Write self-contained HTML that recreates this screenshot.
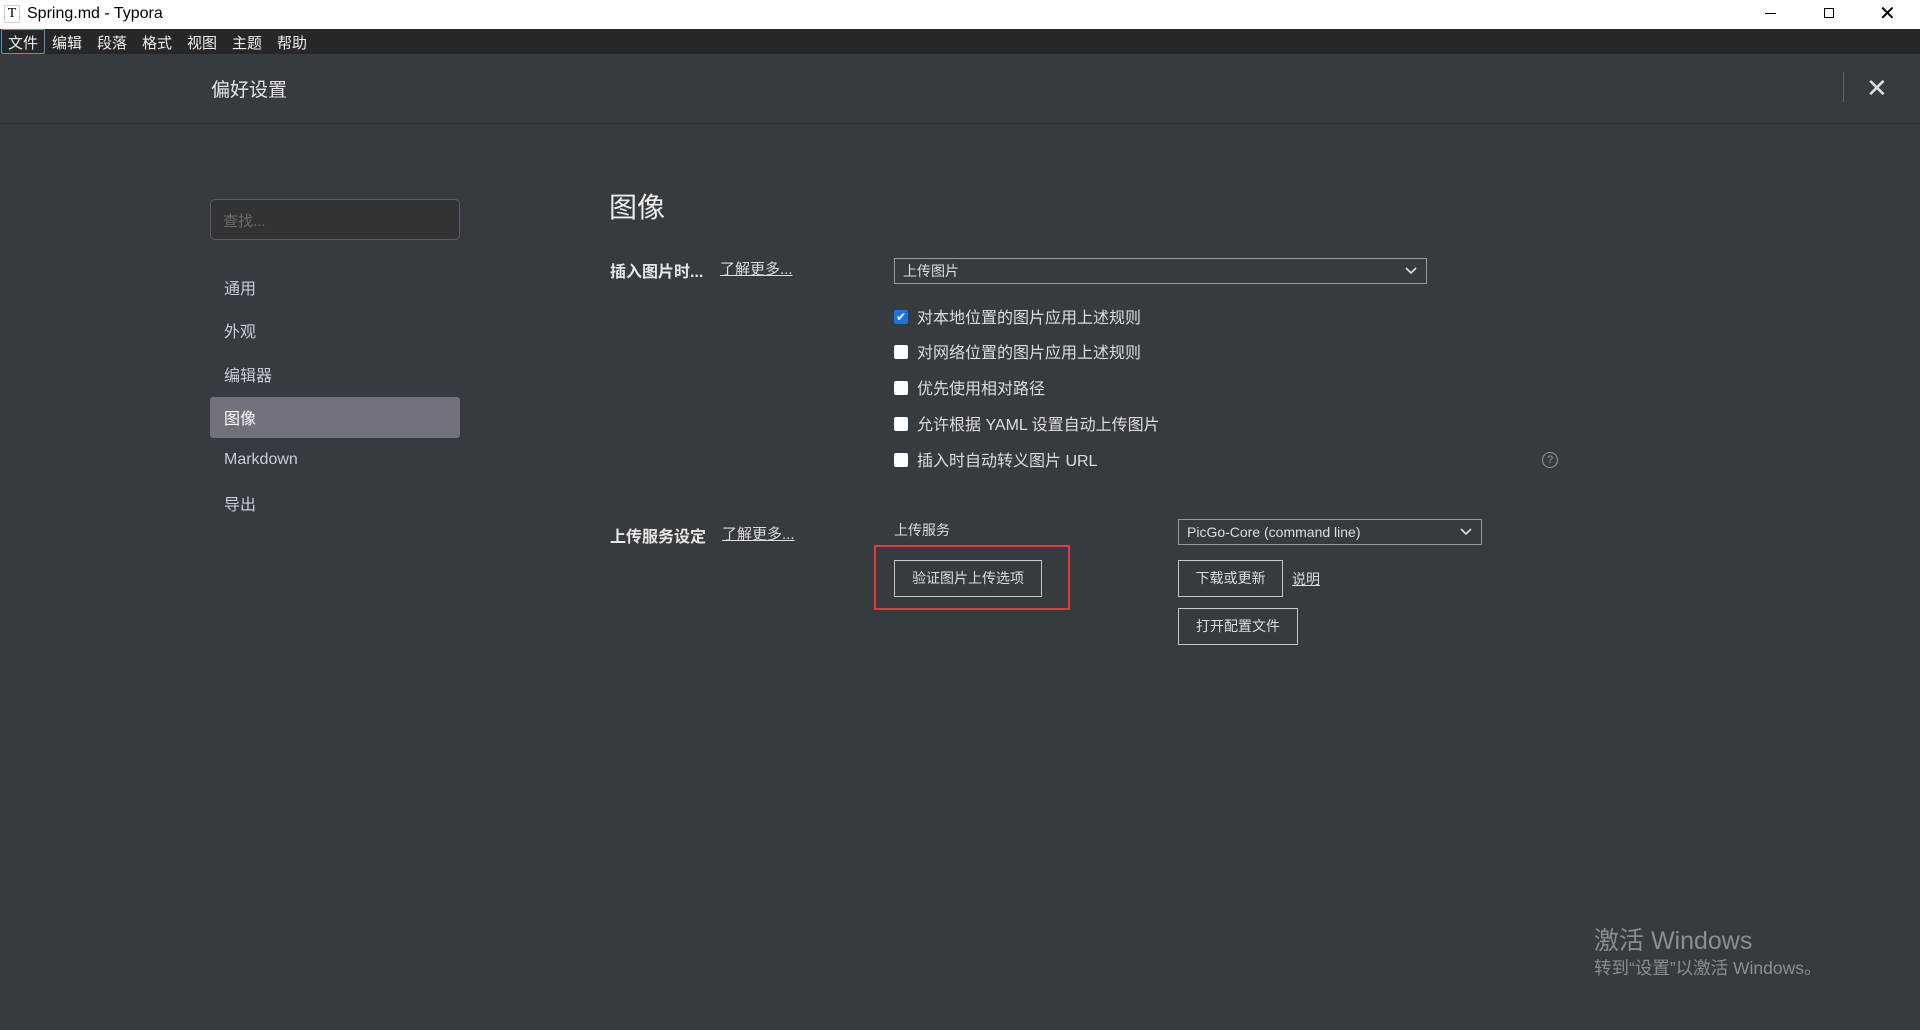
<!DOCTYPE html>
<html><head><meta charset="utf-8"><style>
*{margin:0;padding:0;box-sizing:border-box}
body{width:1920px;height:1030px;background:#363b40;font-family:"Liberation Sans","Noto Sans CJK SC",sans-serif;color:#dcdcdc;position:relative;overflow:hidden}
.a{position:absolute;white-space:nowrap}
.title{left:0;top:0;width:1920px;height:29px;background:#fff;color:#000;font-size:16px}
.menu{left:0;top:29px;width:1920px;height:25px;background:#262729;color:#eee;font-size:15px}
.hdr{left:0;top:54px;width:1920px;height:70px;background:#363b40;border-bottom:1px solid #2e3236}
.cb{width:14px;height:14px;background:#fff;border-radius:2px;left:894px}
.btn{border:1px solid #c8c8c8;color:#ddd;font-size:14px;text-align:center}
.sel{border:1px solid #9a9a9a;font-size:14px;color:#ddd;padding-left:8px}
.ck{font-size:16px;left:917px;color:#ddd}
.side{left:224px;font-size:16px;color:#c8ccd4}
u{text-decoration:underline}
.arr{position:absolute;right:9px;top:8px}
</style></head><body>
<div class="a title">
 <div class="a" style="left:4px;top:5px;width:16px;height:18px;border:1px solid #ccc;border-radius:2px;font-family:'Liberation Serif',serif;font-size:14px;text-align:center;line-height:16px">T</div>
 <div class="a" style="left:27px;top:5px">Spring.md - Typora</div>
 <div class="a" style="left:1765px;top:13px;width:11px;height:1px;background:#000"></div>
 <div class="a" style="left:1824px;top:8px;width:10px;height:10px;border:1px solid #000"></div>
 <div class="a" style="left:1879px;top:1px;font-size:20px">✕</div>
</div>
<div class="a menu">
 <div class="a" style="left:1px;top:0;width:44px;height:25px;border:1px solid #5b8fd6;border-radius:2px"></div>
 <div class="a" style="left:8px;top:3px">文件</div>
 <div class="a" style="left:52px;top:3px">编辑</div>
 <div class="a" style="left:97px;top:3px">段落</div>
 <div class="a" style="left:142px;top:3px">格式</div>
 <div class="a" style="left:187px;top:3px">视图</div>
 <div class="a" style="left:232px;top:3px">主题</div>
 <div class="a" style="left:277px;top:3px">帮助</div>
</div>
<div class="a hdr">
 <div class="a" style="left:211px;top:21px;font-size:19px;color:#e6e6e6">偏好设置</div>
 <div class="a" style="left:1843px;top:18px;width:1px;height:30px;background:#666"></div>
 <div class="a" style="left:1866px;top:19px;font-size:26px;color:#ddd">✕</div>
</div>
<div class="a" style="left:210px;top:199px;width:250px;height:41px;border:1px solid #5a5d61;border-radius:5px;background:#313335"></div>
<div class="a" style="left:223px;top:210px;font-size:15px;color:#6a6d70">查找...</div>
<div class="a side" style="top:275px">通用</div>
<div class="a side" style="top:318px">外观</div>
<div class="a side" style="top:362px">编辑器</div>
<div class="a" style="left:210px;top:397px;width:250px;height:41px;background:#71717b;border-radius:3px"></div>
<div class="a side" style="top:405px;color:#fff">图像</div>
<div class="a side" style="top:451px">Markdown</div>
<div class="a side" style="top:491px">导出</div>

<div class="a" style="left:609px;top:186px;font-size:28px;color:#eee">图像</div>
<div class="a" style="left:610px;top:258px;font-size:16px;font-weight:bold;color:#e6e6e6">插入图片时...</div>
<div class="a" style="left:720px;top:258px;font-size:15px"><u>了解更多...</u></div>
<div class="a sel" style="left:894px;top:258px;width:533px;height:26px;line-height:24px">上传图片<svg class="arr" width="12" height="8" viewBox="0 0 12 8"><path d="M1 1l5 5 5-5" stroke="#ddd" stroke-width="1.6" fill="none"/></svg></div>
<div class="a cb" style="top:310px;background:#1a73e8;color:#fff;font-size:12px;text-align:center;line-height:14px">✔</div>
<div class="a ck" style="top:304px">对本地位置的图片应用上述规则</div>
<div class="a cb" style="top:345px"></div><div class="a ck" style="top:339px">对网络位置的图片应用上述规则</div>
<div class="a cb" style="top:381px"></div><div class="a ck" style="top:375px">优先使用相对路径</div>
<div class="a cb" style="top:417px"></div><div class="a ck" style="top:411px">允许根据 YAML 设置自动上传图片</div>
<div class="a cb" style="top:453px"></div><div class="a ck" style="top:447px">插入时自动转义图片 URL</div>
<div class="a" style="left:1542px;top:452px;width:16px;height:16px;border:1px solid #999;border-radius:50%;font-size:11px;text-align:center;line-height:14px;color:#999">?</div>

<div class="a" style="left:610px;top:523px;font-size:16px;font-weight:bold;color:#e6e6e6">上传服务设定</div>
<div class="a" style="left:722px;top:523px;font-size:15px"><u>了解更多...</u></div>
<div class="a" style="left:894px;top:520px;font-size:14px;color:#ddd">上传服务</div>
<div class="a sel" style="left:1178px;top:519px;width:304px;height:26px;line-height:24px">PicGo-Core (command line)<svg class="arr" width="12" height="8" viewBox="0 0 12 8"><path d="M1 1l5 5 5-5" stroke="#ddd" stroke-width="1.6" fill="none"/></svg></div>
<div class="a" style="left:874px;top:545px;width:196px;height:65px;border:2px solid #e53935"></div>
<div class="a btn" style="left:894px;top:560px;width:148px;height:37px;line-height:35px">验证图片上传选项</div>
<div class="a btn" style="left:1178px;top:560px;width:105px;height:37px;line-height:35px">下载或更新</div>
<div class="a" style="left:1292px;top:569px;font-size:14px"><u>说明</u></div>
<div class="a btn" style="left:1178px;top:608px;width:120px;height:37px;line-height:35px">打开配置文件</div>

<div class="a" style="left:1594px;top:921px;font-size:25px;color:#8a8e93">激活 Windows</div>
<div class="a" style="left:1594px;top:955px;font-size:17.5px;color:#8a8e93">转到“设置”以激活 Windows。</div>
</body></html>
